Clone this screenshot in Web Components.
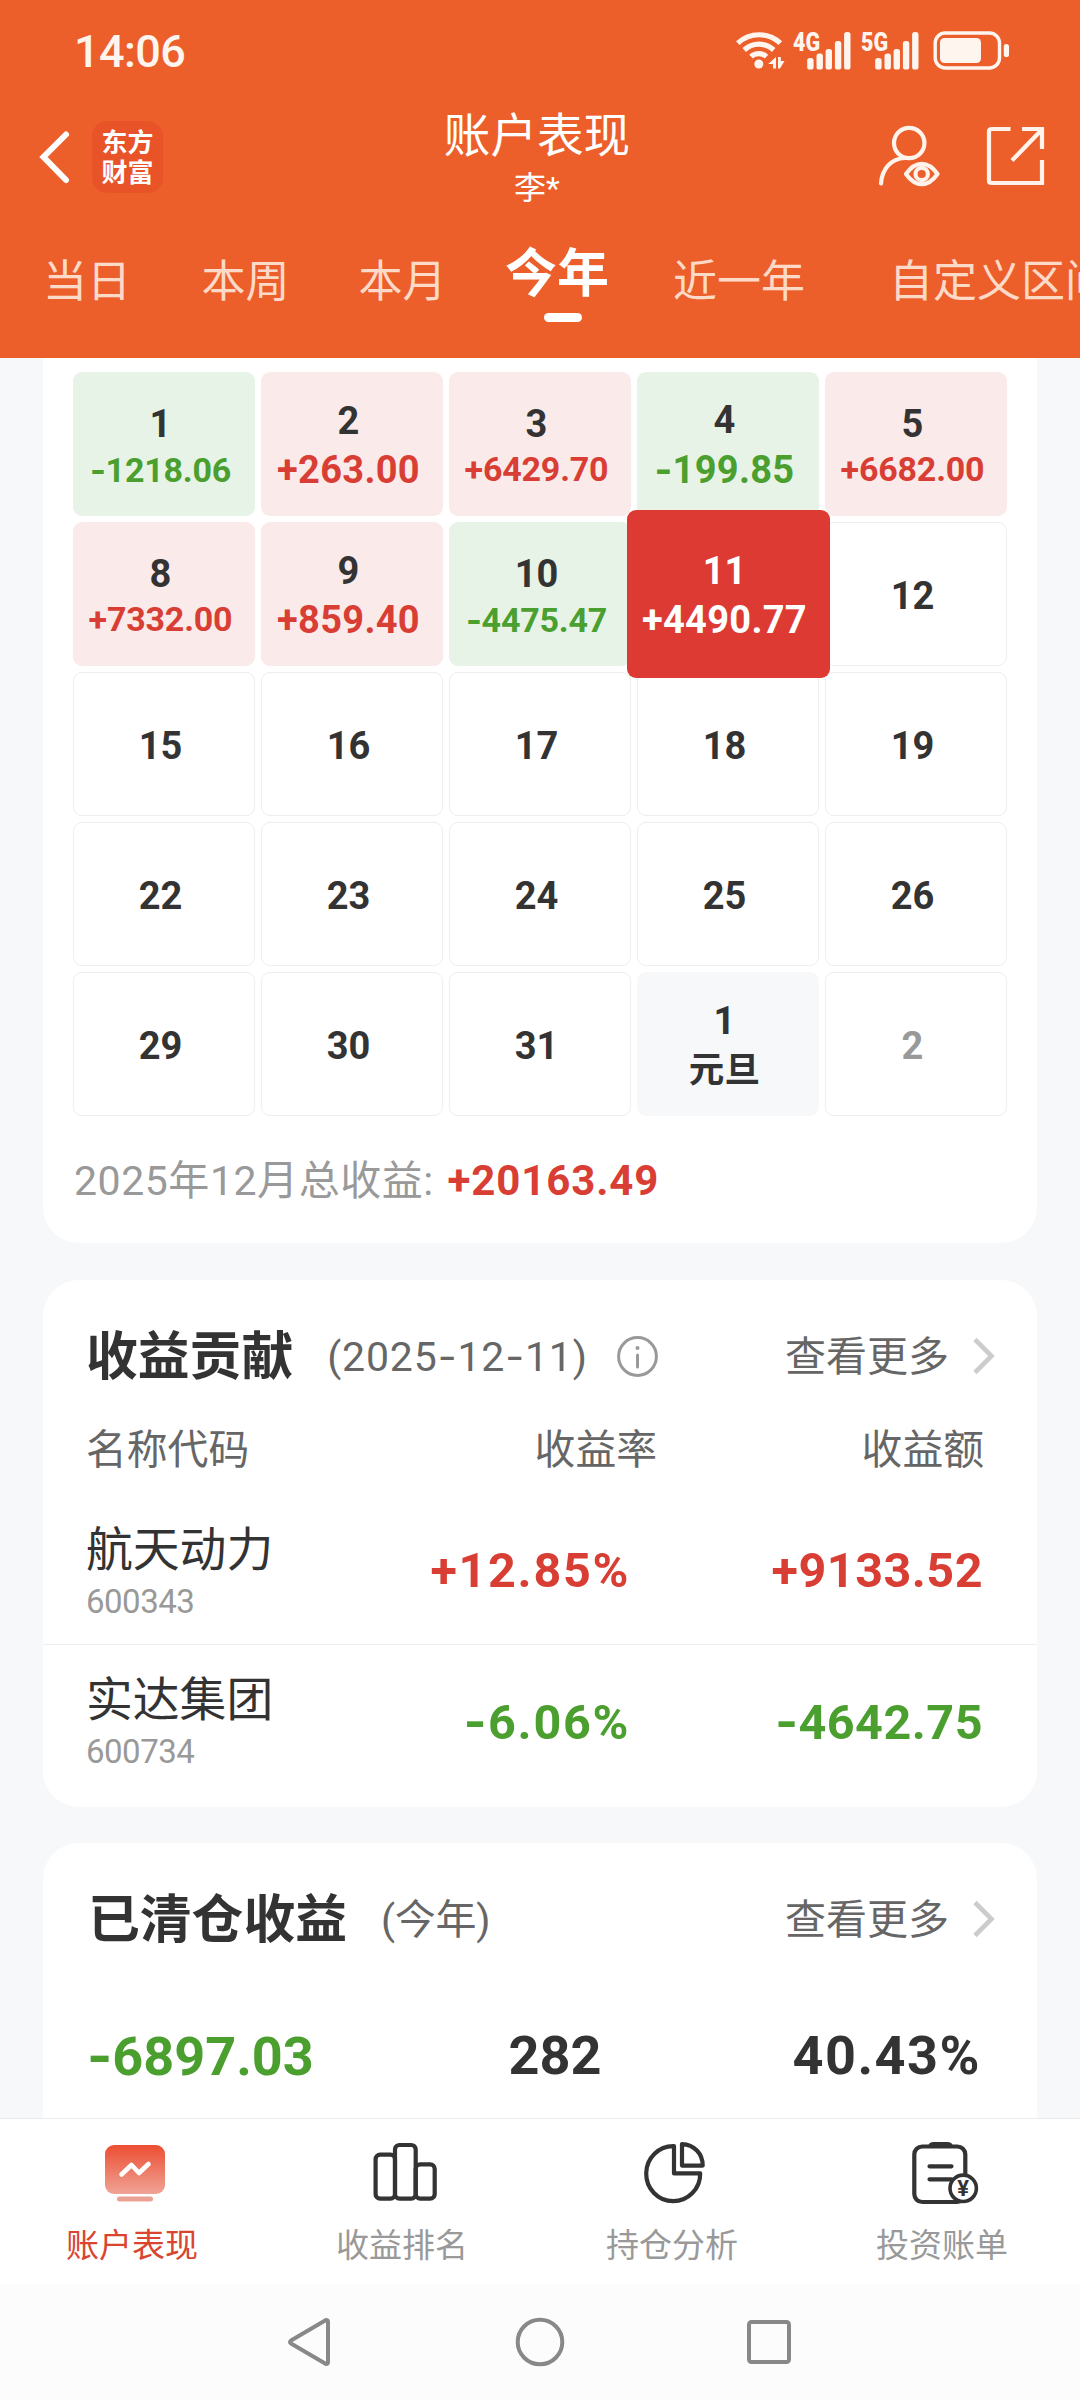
<!DOCTYPE html>
<html lang="zh-CN">
<head>
<meta charset="UTF-8">
<title>账户表现</title>
<style>
    body {
        margin: 0;
        font-family: Roboto, "Noto Sans CJK SC", sans-serif;
        --red: #d93e34;
        --green: #4a9f2f;
        --text: #333;
        --page: #f7f8fa;
    }
</style>
</head>
<body>
<account-page></account-page>

<script>
/**
 * Shared base: renders the template of the element into an open shadow root
 */
class BaseElement extends HTMLElement {
    constructor() {
        super();
        this.attachShadow({ mode: 'open' });
    }

    connectedCallback() {
        this.shadowRoot.innerHTML = this.template();
    }
}

/**
 * Phone status bar: clock, wifi, two SIM signals, battery
 */
class StatusBar extends BaseElement {
    signal(label) {
        return `
            <svg width="60" height="42" viewBox="0 0 60 42" fill="#fff5ef">
                <text x="1" y="21" font-size="26" font-weight="900" textLength="27" lengthAdjust="spacingAndGlyphs">${label}</text>
                <rect x="15.2" y="28" width="6.4" height="11.6" rx="2.6"/>
                <rect x="24.5" y="23.5" width="6.4" height="16.1" rx="2.6"/>
                <rect x="33.6" y="19" width="6.4" height="20.6" rx="2.6"/>
                <rect x="42.9" y="11" width="6.4" height="28.6" rx="2.6"/>
                <rect x="52.1" y="2" width="6.4" height="37.6" rx="2.6"/>
            </svg>`;
    }

    template() {
        return `
            <style>
                :host {
                    display: flex;
                    align-items: center;
                    height: 102px;
                    padding: 0 70px 0 74px;
                    color: #fff5ef;
                }
                .time {
                    flex: 1;
                    font-size: 45px;
                    font-weight: 500;
                    letter-spacing: -.6px;
                }
                svg { display: block; overflow: visible; }
                .sim { margin-left: 6px; }
                .sim + .sim { margin-left: 8px; }
                .battery { margin-left: 12px; }
            </style>
            <span class="time">14:06</span>
            <svg width="52" height="42" viewBox="734 30 52 42" fill="none" stroke="#fff5ef" stroke-width="5.2">
                <path d="M737.8 43.2a31 31 0 0 1 42.5 0"/>
                <path d="M744.2 50a21.5 21.5 0 0 1 29.5 0"/>
                <path d="M751 56.6a11.5 11.5 0 0 1 15.5 0"/>
                <circle cx="758.8" cy="64" r="4.5" fill="#fff5ef" stroke="none"/>
                <path d="M776 57v11.500h-3v-4.500h-4.800zM778 68.500v-11.500h2.800v4h3.700l-4.500 7.500z" fill="#fff5ef" stroke="none"/>
            </svg>
            <div class="sim">${this.signal('4G')}</div>
            <div class="sim">${this.signal('5G')}</div>
            <svg class="battery" width="78" height="42" viewBox="932 30 78 42" fill="#fff5ef">
                <rect x="935.2" y="33" width="64.3" height="35" rx="10" fill="none" stroke="#fff5ef" stroke-width="3.4"/>
                <rect x="940" y="38" width="41" height="25" rx="4.5"/>
                <rect x="1003.8" y="44" width="5.2" height="13" rx="2.6"/>
            </svg>
        `;
    }
}

/**
 * Title row with back arrow, brand badge and two actions
 */
class TitleBar extends BaseElement {
    template() {
        return `
            <style>
                :host {
                    display: grid;
                    grid-template-columns: 1fr auto 1fr;
                    align-items: center;
                    height: 110px;
                    padding: 0 32px 0 38px;
                    color: #fff;
                }
                svg { display: block; }
                .left { display: flex; align-items: center; gap: 20px; }
                .brand {
                    width: 71px;
                    height: 72px;
                    box-sizing: border-box;
                    padding-top: 7px;
                    border-radius: 15px;
                    background: #e95328;
                    font-size: 26px;
                    font-weight: 700;
                    line-height: 30px;
                    text-align: center;
                }
                .title { margin-right: 12px; padding-top: 6px; text-align: center; }
                h1 { margin: 0; font-size: 46.6px; font-weight: 400; line-height: 56px; }
                .user { font-size: 32px; line-height: 48px; }
                .right { display: flex; justify-content: flex-end; gap: 40px; }
            </style>
            <div class="left">
                <svg width="34" height="58" viewBox="38 128 34 58" fill="none" stroke="#fff" stroke-width="6" stroke-linecap="round">
                    <path d="M66 134.500L43.500 157L66 180"/>
                </svg>
                <div class="brand">东方<br>财富</div>
            </div>
            <div class="title">
                <h1><slot></slot></h1>
                <div class="user"><slot name="user"></slot></div>
            </div>
            <div class="right">
                <svg width="68" height="70" viewBox="876 122 68 70" fill="none" stroke="#fff3ec" stroke-width="4.2" stroke-linecap="round" stroke-linejoin="round">
                    <circle cx="909.2" cy="143" r="15.2"/>
                    <path d="M881 183.500c1-14 9.500-25 24-25.500"/>
                    <path d="M906 174c9.500-13.500 22-13.500 31.500 0c-9.500 13.500-22 13.500-31.500 0z"/>
                    <circle cx="921.7" cy="174" r="6.2"/>
                </svg>
                <svg width="64" height="70" viewBox="984 122 64 70" fill="none" stroke="#fff3ec" stroke-width="4.2">
                    <path d="M1010.500 129h-19q-2.500 0-2.500 2.500v49q0 2.500 2.500 2.500h50.500v-23"/>
                    <path d="M1022 129h20v20M1012 160.500l30-31"/>
                </svg>
            </div>
        `;
    }
}

class PeriodTabs extends BaseElement {
    template() {
        const tabs = [
            ['当日', 43], ['本周', 70.5], ['本月', 69],
            ['今年', 58.5, true], ['近一年', 64], ['自定义区间', 84]
        ];
        return `
            <style>
                :host {
                    display: flex;
                    align-items: flex-start;
                    height: 146px;
                    box-sizing: border-box;
                    padding-top: 40px;
                    overflow: hidden;
                    white-space: nowrap;
                    color: #fdd9c8;
                    font-size: 44px;
                    line-height: 60px;
                }
                .tab { flex: none; }
                .active {
                    margin-top: -7px;
                    color: #fff;
                    font-size: 52px;
                    font-weight: 700;
                }
                .active::after {
                    content: "";
                    display: block;
                    width: 38px;
                    height: 9px;
                    margin: 8px auto 0 39px;
                    border-radius: 5px;
                    background: #fff;
                }
            </style>
            ${tabs.map(([name, gap, active]) => `<div class="tab ${active ? 'active' : ''}" style="margin-left:${gap}px">${name}</div>`).join('')}
        `;
    }
}

/**
 * Number with a wide minus sign, coloured by the "tone" attribute
 */
class NumValue extends BaseElement {
    template() {
        const text = this.getAttribute('value').replace(/-/g, '<span>-</span>');
        return `
            <style>
                :host { display: inline-block; white-space: nowrap; }
                :host([tone="up"]) { color: var(--red); }
                :host([tone="down"]) { color: var(--green); }
                span { font-family: Inter, sans-serif; }
            </style>${text}`;
    }
}

/**
 * One day of the calendar
 */
class PnlDay extends BaseElement {
    template() {
        const amount = this.getAttribute('amount') || '';
        const holiday = this.getAttribute('holiday');
        let second = '';
        if (amount) {
            const small = amount.length > 7 && !this.hasAttribute('selected');
            second = `<num-value class="amount ${small ? 'small' : ''}" value="${amount}"></num-value>`;
        } else if (holiday) {
            second = `<div class="amount holiday">${holiday}</div>`;
        }
        return `
            <style>
                :host {
                    display: flex;
                    flex-direction: column;
                    align-items: center;
                    justify-content: center;
                    box-sizing: border-box;
                    padding: 2px 7px 0 0;
                    border: 1px solid #eee;
                    border-radius: 9px;
                    color: var(--text);
                    font-size: 38px;
                    font-weight: 700;
                    --amount: var(--red);
                }
                :host([tone="up"]) { background: #faeaea; border-color: transparent; }
                :host([tone="down"]) { background: #e7f3e6; border-color: transparent; --amount: var(--green); }
                :host([muted]) { color: #999; }
                :host([holiday]) { background: #f6f8fa; border-color: transparent; }
                /* the picked day grows over its neighbours */
                :host([selected]) {
                    position: relative;
                    z-index: 1;
                    margin: -12px -10.5px;
                    border: 0;
                    background: #dd3a33;
                    color: #fff;
                    --amount: #fff;
                }
                .day { padding-top: 1px; line-height: 49px; }
                .day:last-child { padding-top: 3px; }
                .amount { color: var(--amount); line-height: 49px; letter-spacing: .3px; }
                .small { font-size: 34px; line-height: 41px; letter-spacing: -.2px; padding-bottom: 1px; }
                .holiday { color: var(--text); font-size: 35.5px; }
            </style>
            <div class="day">${this.getAttribute('day')}</div>${second}
        `;
    }
}

/**
 * Month calendar of working days
 */
class PnlCalendar extends BaseElement {
    template() {
        const amounts = {
            1: '-1218.06', 2: '+263.00', 3: '+6429.70', 4: '-199.85', 5: '+6682.00',
            8: '+7332.00', 9: '+859.40', 10: '-4475.47', 11: '+4490.77'
        };
        const days = [1, 2, 3, 4, 5, 8, 9, 10, 11, 12, 15, 16, 17, 18, 19, 22, 23, 24, 25, 26, 29, 30, 31];
        const cells = days.map(day => {
            const amount = amounts[day];
            const tone = amount ? `amount="${amount}" tone="${amount[0] === '+' ? 'up' : 'down'}"` : '';
            return `<pnl-day day="${day}" ${tone} ${day === 11 ? 'selected' : ''}></pnl-day>`;
        }).join('');
        return `
            <style>
                :host {
                    display: grid;
                    grid-template-columns: repeat(5, 182px);
                    grid-auto-rows: 144px;
                    gap: 6px;
                }
            </style>
            ${cells}
            <pnl-day day="1" holiday="元旦"></pnl-day>
            <pnl-day day="2" muted></pnl-day>
        `;
    }
}

/**
 * White rounded card with optional heading row
 */
class InfoCard extends BaseElement {
    template() {
        const heading = this.getAttribute('heading');
        const info = this.hasAttribute('info') ? `
            <svg class="info" width="43" height="43" viewBox="0 0 43 43" fill="none" stroke="#999" stroke-width="3">
                <circle cx="21.500" cy="21.500" r="18.900"/>
                <path d="M21.500 20v12" stroke-linecap="round"/>
                <circle cx="21.500" cy="13" r="2" fill="#999" stroke="none"/>
            </svg>` : '';
        return `
            <style>
                :host {
                    display: block;
                    box-sizing: border-box;
                    border-radius: 36px;
                    background: #fff;
                }
                header {
                    display: flex;
                    align-items: center;
                    height: 60px;
                    padding: 46px 40px 0 var(--heading-left, 43px);
                    color: #666;
                    font-size: 41px;
                    line-height: 60px;
                }
                h2 {
                    margin: 0 34px 0 0;
                    padding-top: 4px;
                    color: var(--text);
                    font-size: 51.8px;
                    font-weight: 700;
                }
                svg { display: block; }
                .info { margin-left: 28px; }
                .more { margin-left: auto; margin-right: 22px; padding-top: 2px; }
            </style>
            ${heading ? `
            <header>
                <h2>${heading}</h2>
                <slot name="note"></slot>
                ${info}
                <span class="more">查看更多</span>
                <svg width="26" height="40" viewBox="0 0 26 40" fill="none" stroke="#ccc" stroke-width="4.6">
                    <path d="M4 3.500L20.500 20L4 36.500"/>
                </svg>
            </header>` : ''}
            <slot></slot>
        `;
    }
}

/**
 * One holding: name and code, rate, amount
 */
class HoldingRow extends BaseElement {
    template() {
        const rate = this.getAttribute('rate');
        const tone = rate[0] === '+' ? 'up' : 'down';
        return `
            <style>
                :host {
                    display: grid;
                    grid-template-columns: 1fr 300px 327px;
                    align-items: center;
                    box-sizing: border-box;
                    height: 150px;
                    padding: 2px 54px 0 43px;
                    text-align: right;
                }
                .name { padding-top: 6px; color: var(--text); font-size: 46.8px; line-height: 56px; text-align: left; }
                .code { color: #999; font-size: 33px; line-height: 48px; letter-spacing: -.5px; text-align: left; }
                num-value { font-size: 48.5px; font-weight: 700; letter-spacing: .5px; }
                .rate { padding-right: 26px; letter-spacing: 1.700px; }
            </style>
            <div>
                <div class="name"><slot></slot></div>
                <div class="code">${this.getAttribute('code')}</div>
            </div>
            <num-value class="rate" tone="${tone}" value="${rate}"></num-value>
            <num-value tone="${tone}" value="${this.getAttribute('amount')}"></num-value>
        `;
    }
}

/**
 * Bottom application tabs
 */
class AppTabs extends BaseElement {
    template() {
        const items = [
            ['账户表现', `
                <defs><linearGradient id="g" x1="0" y1="0" x2="0" y2="1"><stop offset="0" stop-color="#ec4e32"/><stop offset="1" stop-color="#f0a396"/></linearGradient></defs>
                <rect x="6" y="8" width="60" height="49" rx="9" fill="url(#g)"/>
                <rect x="18" y="59.500" width="36" height="5" rx="2.500" fill="#eba194"/>
                <path d="M22.500 37.500l10-9.500 7.500 8 9.500-9" stroke="#fff" stroke-width="4.600"/>`],
            ['收益排名', `
                <rect x="6.600" y="17.700" width="19.400" height="44" rx="4.500"/>
                <rect x="26" y="8" width="20.700" height="53.700" rx="4.500"/>
                <rect x="46.700" y="27.300" width="19" height="34.400" rx="4.500"/>`],
            ['持仓分析', `
                <path d="M35 9.200a27 27.500 0 1 0 26.200 27.200h-26.200z"/>
                <path d="M43 7.100v21.500h20.700c0-12-8.500-21-20.700-21.500z"/>`],
            ['投资账单', `
                <rect x="5.300" y="9.500" width="51" height="55.500" rx="8"/>
                <path d="M19 11q0-6 5-6h15q5 0 5 6z" fill="#333" stroke="none"/>
                <path d="M20.500 29.300h22M20.500 42.300h22"/>
                <circle cx="54.200" cy="51.300" r="13.200" fill="#fff" stroke-width="3.600"/>
                <text x="54.200" y="59" text-anchor="middle" font-size="22" font-weight="700" fill="#333" stroke="none">¥</text>`]
        ];
        return `
            <style>
                :host {
                    display: grid;
                    grid-template-columns: repeat(4, 1fr);
                    box-sizing: border-box;
                    height: 166px;
                    border-top: 1px solid #ebebed;
                    background: #fff;
                    color: #999;
                    font-size: 33px;
                }
                .item { display: flex; flex-direction: column; align-items: center; padding-top: 18px; }
                .active { color: #d9452f; }
                svg { display: block; }
                g { stroke-linecap: round; stroke-linejoin: round; stroke-width: 4.200px; }
                .item:not(.active) g { stroke: #333; }
                span { padding-right: 6px; margin-top: 17px; line-height: 40px; }
            </style>
            ${items.map(([name, icon], i) => `
            <div class="item ${i === 0 ? 'active' : ''}">
                <svg width="72" height="72" viewBox="0 0 72 72" fill="none">
                    <g>${icon}</g>
                </svg>
                <span>${name}</span>
            </div>`).join('')}
        `;
    }
}

/**
 * Android navigation keys
 */
class SystemNav extends BaseElement {
    template() {
        return `
            <style>
                :host {
                    display: flex;
                    align-items: center;
                    justify-content: center;
                    gap: 180px;
                    height: 116px;
                    background: #fcfcfc;
                }
                svg { display: block; }
            </style>
            <svg width="50" height="50" viewBox="0 0 50 50" fill="none" stroke="#888" stroke-width="4" stroke-linejoin="round">
                <path d="M41 3q2 0 2 2v40q0 2-2 2L6 26.500q-2-1.500 0-3z"/>
            </svg>
            <svg width="50" height="50" viewBox="0 0 50 50" fill="none" stroke="#888" stroke-width="4">
                <circle cx="25" cy="25" r="22.300"/>
            </svg>
            <svg width="50" height="50" viewBox="0 0 50 50" fill="none" stroke="#888" stroke-width="4">
                <rect x="4" y="5" width="40" height="40" rx="2.500"/>
            </svg>
        `;
    }
}

class AccountPage extends BaseElement {
    template() {
        return `
            <style>
                :host {
                    display: flex;
                    flex-direction: column;
                    width: 1080px;
                    height: 2400px;
                    overflow: hidden;
                    background: var(--page);
                }
                .top { background: #ec5f2b; }
                main {
                    flex: 1;
                    min-height: 0;
                    overflow: hidden;
                    padding: 0 43px;
                }
                .calendar { height: 885px; padding: 14px 30px 0; border-radius: 0 0 36px 36px; }
                .total {
                    padding: 1px 0 0 1px;
                    color: #999;
                    font-size: 41px;
                    line-height: 127px;
                    letter-spacing: .55px;
                }
                .total num-value { margin-left: 3px; font-size: 42px; font-weight: 700; letter-spacing: .9px; }
                .contribution { height: 527px; margin-top: 37px; }
                .date { letter-spacing: .85px; }
                .columns {
                    display: grid;
                    grid-template-columns: 1fr 300px 327px;
                    margin: 34px 0 15px;
                    padding: 0 53px 0 43px;
                    color: #666;
                    font-size: 40.8px;
                    line-height: 60px;
                    text-align: right;
                }
                .columns :first-child { text-align: left; }
                .divided { border-bottom: 1px solid #eee; }
                .cleared { height: 400px; margin-top: 36px; --heading-left: 45px; }
                .note { padding-top: 2px; letter-spacing: -.3px; }
                .stats {
                    display: grid;
                    grid-template-columns: 350px 236px 1fr;
                    margin-top: 62px;
                    padding: 0 56px 0 44px;
                    color: var(--text);
                    font-size: 54px;
                    font-weight: 700;
                    line-height: 90px;
                }
                .stats .count { text-align: center; }
                .stats .ratio { text-align: right; letter-spacing: 1.5px; }
            </style>
            <div class="top">
                <status-bar></status-bar>
                <title-bar>账户表现<span slot="user">李*</span></title-bar>
                <period-tabs></period-tabs>
            </div>
            <main>
                <info-card class="calendar">
                    <pnl-calendar></pnl-calendar>
                    <div class="total">2025年12月总收益: <num-value tone="up" value="+20163.49"></num-value></div>
                </info-card>
                <info-card class="contribution" heading="收益贡献" info>
                    <num-value slot="note" class="date" value="(2025-12-11)"></num-value>
                    <div class="columns"><span>名称代码</span><span>收益率</span><span>收益额</span></div>
                    <holding-row class="divided" code="600343" rate="+12.85%" amount="+9133.52">航天动力</holding-row>
                    <holding-row code="600734" rate="-6.06%" amount="-4642.75">实达集团</holding-row>
                </info-card>
                <info-card class="cleared" heading="已清仓收益">
                    <span slot="note" class="note">(今年)</span>
                    <div class="stats">
                        <num-value tone="down" value="-6897.03"></num-value>
                        <num-value class="count" value="282"></num-value>
                        <num-value class="ratio" value="40.43%"></num-value>
                    </div>
                </info-card>
            </main>
            <app-tabs></app-tabs>
            <system-nav></system-nav>
        `;
    }
}

customElements.define('status-bar', StatusBar);
customElements.define('title-bar', TitleBar);
customElements.define('period-tabs', PeriodTabs);
customElements.define('num-value', NumValue);
customElements.define('pnl-day', PnlDay);
customElements.define('pnl-calendar', PnlCalendar);
customElements.define('info-card', InfoCard);
customElements.define('holding-row', HoldingRow);
customElements.define('app-tabs', AppTabs);
customElements.define('system-nav', SystemNav);
customElements.define('account-page', AccountPage);
</script>
</body>
</html>
